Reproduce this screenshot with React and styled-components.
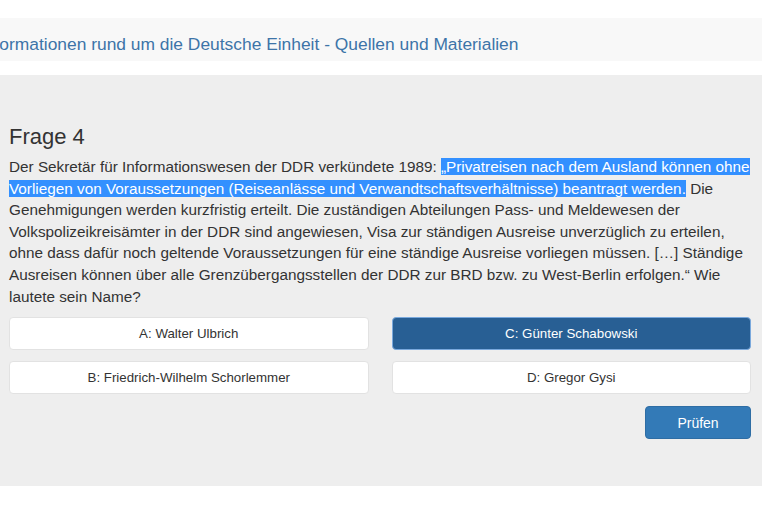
import React from 'react'
import styled, { createGlobalStyle } from 'styled-components'

const GlobalStyle = createGlobalStyle`
  html, body {
    margin: 0;
    padding: 0;
    background: #fff;
    overflow: hidden;
  }
  body {
    font-family: "Liberation Sans", Arial, sans-serif;
    color: #333;
  }
`

const answers = [
  { key: 'A', name: 'Walter Ulbrich' },
  { key: 'C', name: 'Günter Schabowski', selected: true },
  { key: 'B', name: 'Friedrich-Wilhelm Schorlemmer' },
  { key: 'D', name: 'Gregor Gysi' },
]

const App = () => {
  return (
    <Page>
      <GlobalStyle />
      <Header>
        <HeaderTitle>Informationen rund um die Deutsche Einheit - Quellen und Materialien</HeaderTitle>
      </Header>
      <Panel>
        <Title>Frage 4</Title>
        <Question>
          Der Sekretär für Informationswesen der DDR verkündete 1989:{' '}
          <Marked>„Privatreisen nach dem Ausland können ohne Vorliegen von Voraussetzungen (Reiseanlässe und Verwandtschaftsverhältnisse) beantragt werden.</Marked>{' '}
          Die Genehmigungen werden kurzfristig erteilt. Die zuständigen Abteilungen Pass- und Meldewesen der Volkspolizeikreisämter in der DDR sind angewiesen, Visa zur ständigen Ausreise unverzüglich zu erteilen, ohne dass dafür noch geltende Voraussetzungen für eine ständige Ausreise vorliegen müssen. […] Ständige Ausreisen können über alle Grenzübergangsstellen der DDR zur BRD bzw. zu West-Berlin erfolgen.“ Wie lautete sein Name?
        </Question>
        <AnswerGrid>
          {answers.map((a) => (
            <Answer key={a.key} $selected={a.selected}>
              {a.key}: {a.name}
            </Answer>
          ))}
        </AnswerGrid>
        <Actions>
          <CheckBtn>Prüfen</CheckBtn>
        </Actions>
      </Panel>
    </Page>
  )
}

export default App

const Page = styled.div`
  width: 762px;
  height: 508px;
  padding-top: 18px;
  box-sizing: border-box;
`
const Header = styled.div`
  height: 43px;
  background: #f8f8f8;
  display: flex;
  align-items: center;
  overflow: hidden;
`
const HeaderTitle = styled.div`
  margin-left: -20px;
  margin-top: 9px;
  font-size: 17.4px;
  color: #3d74a8;
  white-space: nowrap;
`
const Panel = styled.div`
  margin-top: 14px;
  height: 411px;
  box-sizing: border-box;
  background: #eeeeee;
  padding: 49px 11px 0 9px;
`
const Title = styled.h2`
  margin: 0;
  font-size: 22px;
  font-weight: 400;
  line-height: 26px;
  color: #333;
`
const Question = styled.p`
  margin: 6px 0 0;
  font-size: 15.3px;
  line-height: 21.6px;
  color: #333;
`
const Marked = styled.span`
  background: #3390ff;
  color: #fff;
`
const AnswerGrid = styled.div`
  margin-top: 10px;
  display: grid;
  grid-template-columns: 1fr 1fr;
  column-gap: 23px;
  row-gap: 11px;
`
const Answer = styled.div`
  height: 33px;
  box-sizing: border-box;
  display: flex;
  align-items: center;
  justify-content: center;
  border-radius: 4px;
  font-size: 13.3px;
  background: ${(p) => (p.$selected ? '#285f94' : '#fff')};
  color: ${(p) => (p.$selected ? '#fff' : '#333')};
  border: 1px solid ${(p) => (p.$selected ? '#7aa9dd' : '#e2e2e2')};
`
const Actions = styled.div`
  display: flex;
  justify-content: flex-end;
  margin-top: 12px;
`
const CheckBtn = styled.button`
  width: 106px;
  height: 33px;
  border: 1px solid #2e6da4;
  border-radius: 4px;
  background: #337ab7;
  color: #fff;
  font-family: "Liberation Sans", Arial, sans-serif;
  font-size: 14px;
  cursor: pointer;
`
